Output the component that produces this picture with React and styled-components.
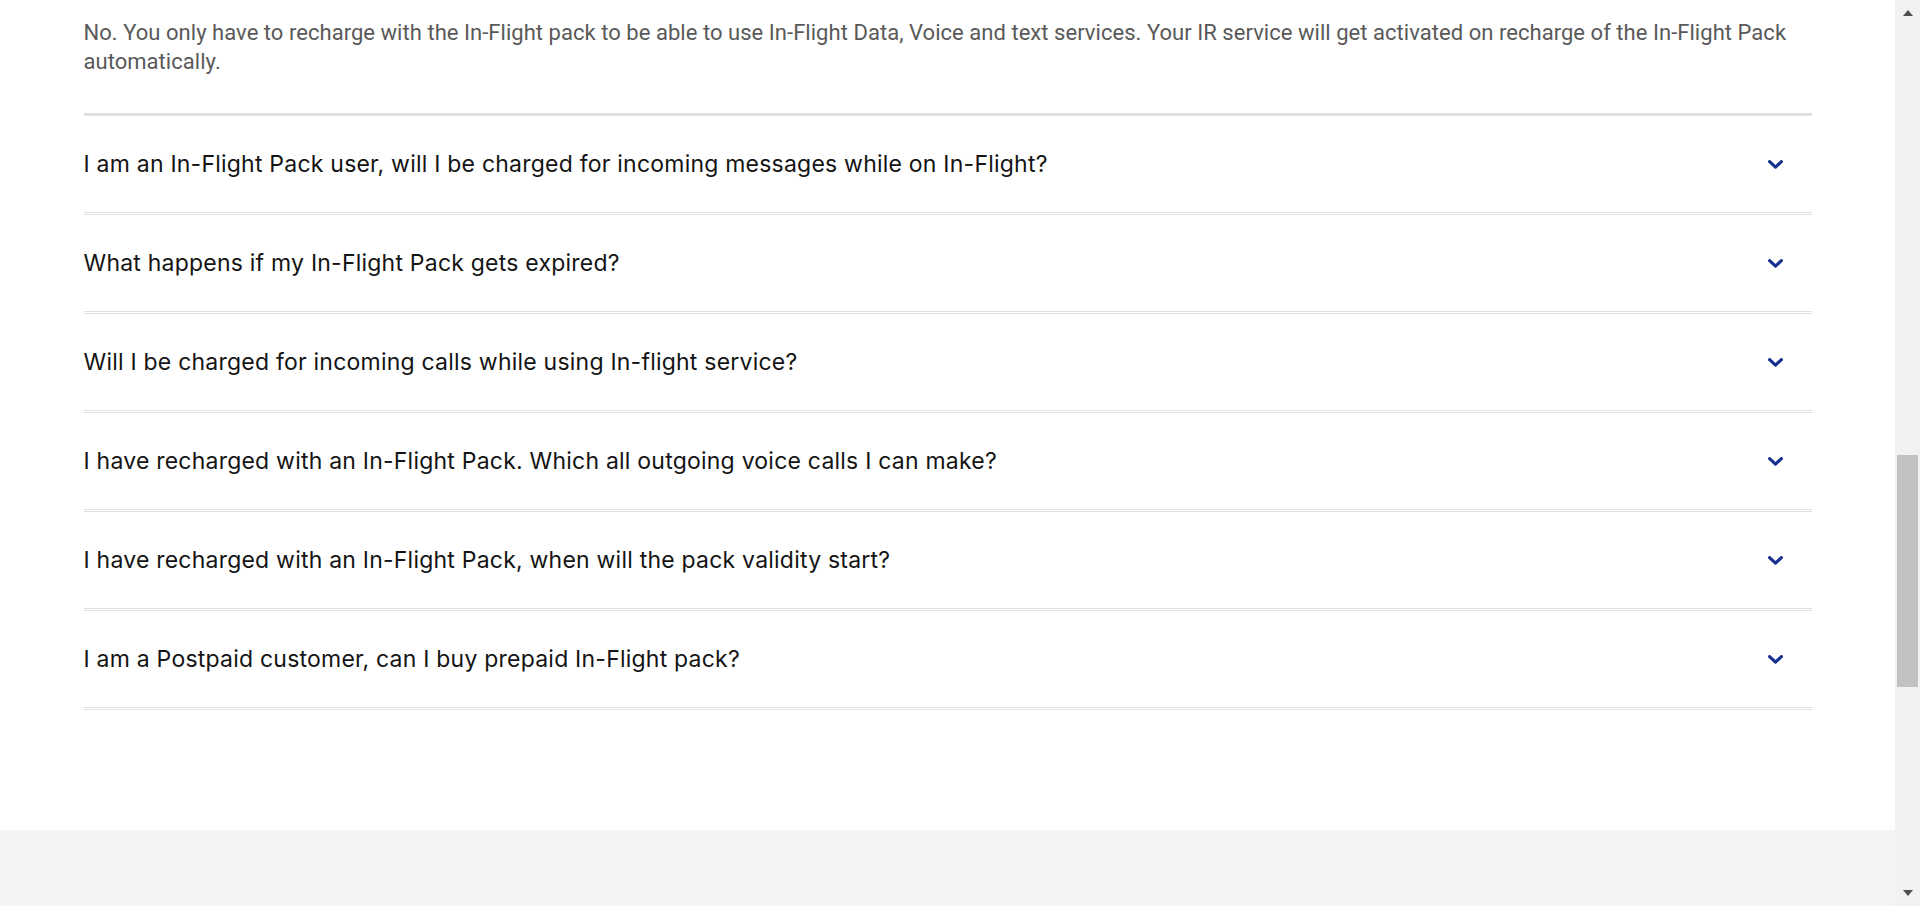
import React from 'react'
import styled, { createGlobalStyle } from 'styled-components'

const GlobalStyle = createGlobalStyle`
  html, body {
    margin: 0;
    padding: 0;
    overflow: hidden;
    background: #fff;
  }
`

const Viewport = styled.div`
  display: flex;
  height: 100vh;
  width: 100vw;
`

const Page = styled.div`
  flex: 1;
  display: flex;
  flex-direction: column;
  overflow: hidden;
`

const FaqSection = styled.section`
  background: #fff;
  padding-bottom: 120px;
`

const Container = styled.div`
  max-width: 1728px;
  margin: 0 auto;
`

const Answer = styled.div`
  padding: 18px 0 37px;
  border-bottom: 3px solid #e0e0e0;
`

const AnswerText = styled.p`
  margin: 0;
  font-family: Roboto, "Liberation Sans", sans-serif;
  font-size: 22px;
  line-height: 29px;
  letter-spacing: 0.04px;
  color: #595959;
`

const Item = styled.div`
  height: 96px;
  display: flex;
  align-items: center;
  justify-content: space-between;
  border-bottom: 3px double #e0e0e0;
  padding-right: 29px;
`

const Question = styled.span`
  font-family: Inter, "Noto Sans", sans-serif;
  font-size: 23px;
  color: #141414;
  letter-spacing: 0.22px;
`

const Chevron = styled.svg`
  width: 15px;
  height: 9px;
  flex-shrink: 0;
`

const Footer = styled.footer`
  flex: 1;
  background: #f4f4f4;
`

const ScrollTrack = styled.div`
  width: 25px;
  background: #f1f1f1;
  display: flex;
  flex-direction: column;
  align-items: center;
  justify-content: space-between;
`

const Arrow = styled.div`
  width: 0;
  height: 0;
  border-left: 5px solid transparent;
  border-right: 5px solid transparent;
  ${p => p.$down
    ? 'border-top: 6px solid #505050; margin-bottom: 10px;'
    : 'border-bottom: 6px solid #505050; margin-top: 10px;'}
`

const Thumb = styled.div`
  width: 21px;
  height: 232px;
  background: #c1c1c1;
  margin-top: 439px;
`

const Spacer = styled.div`
  flex: 1;
`

const questions = [
  'I am an In-Flight Pack user, will I be charged for incoming messages while on In-Flight?',
  'What happens if my In-Flight Pack gets expired?',
  'Will I be charged for incoming calls while using In-flight service?',
  'I have recharged with an In-Flight Pack. Which all outgoing voice calls I can make?',
  'I have recharged with an In-Flight Pack, when will the pack validity start?',
  'I am a Postpaid customer, can I buy prepaid In-Flight pack?'
]

const ChevronDown = () => (
  <Chevron viewBox='0 0 15 9'>
    <polyline points='1.6,1.6 7.5,7.2 13.4,1.6' fill='none' stroke='#16308f' strokeWidth='3.1' strokeLinecap='round' strokeLinejoin='round' />
  </Chevron>
)

const App = () => (
  <Viewport>
    <GlobalStyle />
    <Page>
      <FaqSection>
        <Container>
          <Answer>
            <AnswerText>
              No. You only have to recharge with the In-Flight pack to be able to use In-Flight Data, Voice and text services. Your IR service will get activated on recharge of the In-Flight Pack automatically.
            </AnswerText>
          </Answer>
          {questions.map(q => (
            <Item key={q}>
              <Question>{q}</Question>
              <ChevronDown />
            </Item>
          ))}
        </Container>
      </FaqSection>
      <Footer />
    </Page>
    <ScrollTrack>
      <Arrow />
      <Thumb />
      <Spacer />
      <Arrow $down />
    </ScrollTrack>
  </Viewport>
)

export default App
